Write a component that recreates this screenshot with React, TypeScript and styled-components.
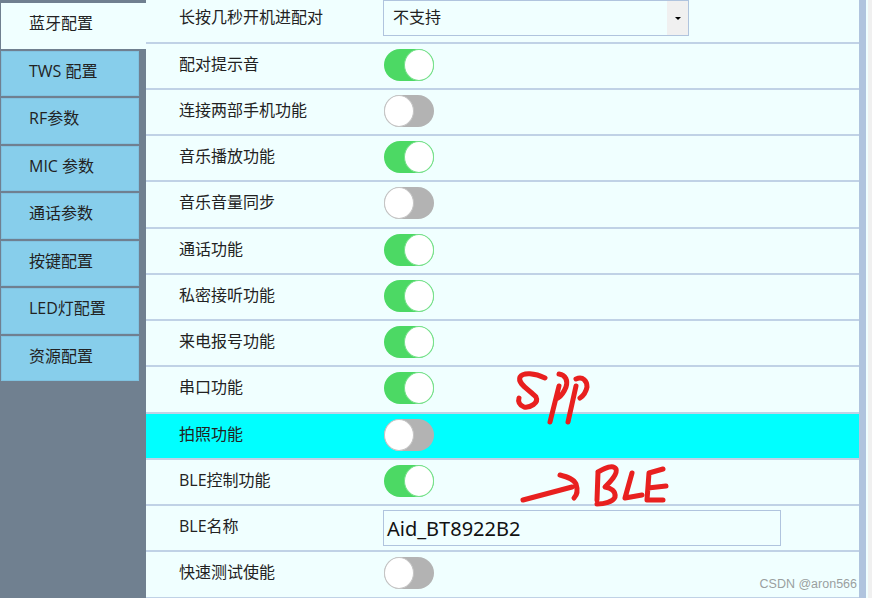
import React from "react";
import styled, { createGlobalStyle } from "styled-components";

const Global = createGlobalStyle`
  html, body { margin: 0; padding: 0; width: 872px; height: 598px; overflow: hidden; background: #f0f0f0; }
  #root { width: 872px; height: 598px; }
`;

const Screen = styled.div`
  position: relative;
  display: flex;
  width: 872px;
  height: 598px;
  overflow: hidden;
  font-family: "Open Sans", "Noto Sans CJK SC", sans-serif;
  font-size: 16px;
  color: #222;
  background: #f0f0f0;
`;

const Sidebar = styled.nav`
  flex: 0 0 146px;
  background: #708090;
  padding-top: 3px;
  display: flex;
  flex-direction: column;
  gap: 2px;
  box-sizing: border-box;
`;

const Tab = styled.div<{ $active?: boolean }>`
  box-sizing: border-box;
  height: 45.5px;
  margin-left: 1px;
  width: ${(p) => (p.$active ? "145px" : "138px")};
  padding: 0 0 5px 27px;
  display: flex;
  align-items: center;
  background: ${(p) => (p.$active ? "#f0ffff" : "#87ceeb")};
  border: 1px solid ${(p) => (p.$active ? "#f0ffff" : "#80c2e0")};
  font-size: 16px;
  line-height: 20px;
`;

const Main = styled.main`
  flex: 0 0 713px;
  background: #f0ffff;
  overflow: hidden;
`;

const Row = styled.div<{ $hi?: boolean }>`
  box-sizing: border-box;
  height: 46.25px;
  display: flex;
  align-items: center;
  border-bottom: 2px solid #c0d2e6;
  background: ${(p) => (p.$hi ? "#00ffff" : "transparent")};
  &:first-child { margin-top: -2.75px; }
`;

const Label = styled.div`
  flex: 0 0 237px;
  padding-left: 33px;
  box-sizing: border-box;
  font-size: 16px;
  line-height: 20px;
  position: relative;
  top: -2px;
  white-space: nowrap;
`;

const Select = styled.div`
  box-sizing: border-box;
  width: 306px;
  height: 36px;
  border: 1px solid #b0c4de;
  display: flex;
  align-items: center;
  justify-content: space-between;
  padding-left: 9px;
  font-size: 16px;
  line-height: 20px;
  position: relative;
  top: -1px;
`;

const SelectText = styled.span`
  position: relative;
  top: -1px;
`;

const Caret = styled.span`
  width: 21px;
  height: 34px;
  background: #f0f0f0;
  display: flex;
  align-items: center;
  justify-content: center;
  &::after {
    content: "";
    border-left: 3px solid transparent;
    border-right: 3px solid transparent;
    border-top: 3px solid #000;
  }
`;

const NameInput = styled.div`
  box-sizing: border-box;
  width: 398px;
  height: 36px;
  border: 1px solid #b0c4de;
  display: flex;
  align-items: center;
  padding-left: 3px;
  font-family: "Noto Sans", "Liberation Sans", sans-serif;
  font-size: 20px;
  color: #111;
`;

const Switch = styled.div<{ $on?: boolean }>`
  box-sizing: border-box;
  width: 50px;
  height: 32px;
  margin-left: 1px;
  border-radius: 16px;
  display: flex;
  justify-content: ${(p) => (p.$on ? "flex-end" : "flex-start")};
  background: ${(p) => (p.$on ? "#4cd964" : "#b3b3b3")};
  position: relative;
  top: -1px;
  &::after {
    content: "";
    box-sizing: border-box;
    width: 30px;
    height: 32px;
    border-radius: 50%;
    background: #fff;
    border: 1.5px solid ${(p) => (p.$on ? "#76e08a" : "#c4c4c4")};
  }
`;

const Rail = styled.div`
  flex: 0 0 7px;
  background: #b0c4de;
`;

const Gap = styled.div`
  flex: 0 0 2px;
  background: #f0ffff;
`;

const Scribble = styled.svg`
  position: absolute;
  left: 0;
  top: 0;
  width: 872px;
  height: 598px;
  pointer-events: none;
  fill: none;
  stroke: #e8201f;
  stroke-width: 5;
  stroke-linecap: round;
  stroke-linejoin: round;
`;

const Watermark = styled.div`
  position: absolute;
  right: 15px;
  top: 575px;
  font-family: "Liberation Sans", sans-serif;
  font-size: 12.5px;
  line-height: 18px;
  color: #9a9f9f;
`;

const tabs = ["蓝牙配置", "TWS 配置", "RF参数", "MIC 参数", "通话参数", "按键配置", "LED灯配置", "资源配置"];

type R = { label: string; on?: boolean; kind?: "select" | "input"; hi?: boolean };
const rows: R[] = [
  { label: "长按几秒开机进配对", kind: "select" },
  { label: "配对提示音", on: true },
  { label: "连接两部手机功能", on: false },
  { label: "音乐播放功能", on: true },
  { label: "音乐音量同步", on: false },
  { label: "通话功能", on: true },
  { label: "私密接听功能", on: true },
  { label: "来电报号功能", on: true },
  { label: "串口功能", on: true },
  { label: "拍照功能", on: false, hi: true },
  { label: "BLE控制功能", on: true },
  { label: "BLE名称", kind: "input" },
  { label: "快速测试使能", on: false },
];

export default function App() {
  return (
    <Screen>
      <Global />
      <Sidebar>
        {tabs.map((t, i) => (
          <Tab key={t} $active={i === 0}>{t}</Tab>
        ))}
      </Sidebar>
      <Main>
        {rows.map((r) => (
          <Row key={r.label} $hi={r.hi}>
            <Label>{r.label}</Label>
            {r.kind === "select" && (
              <Select><SelectText>不支持</SelectText><Caret /></Select>
            )}
            {r.kind === "input" && <NameInput>Aid_BT8922B2</NameInput>}
            {!r.kind && <Switch $on={r.on} />}
          </Row>
        ))}
      </Main>
      <Rail />
      <Gap />
      <Scribble viewBox="0 0 872 598">
        <path d="M545 378C535 373 523 372 520 377C517 384 530 390 536 397C539 403 530 408 524 407C519 405 518 401 519 398" />
        <path d="M550 422L559 386M559 374C566 375 568 381 566 387C564 392 561 396 558 398" />
        <path d="M568 422L576 386M576 379C583 376 587 381 587 387C586 392 583 396 580 398" />
        <path d="M523 500L572 487M560 475C568 477 574 479 576 484C578 490 577 495 574 498" />
        <path d="M598 472L597 500M598 472C605 468 613 464 616 469C618 474 610 482 605 487C611 488 616 491 615 497C613 502 604 504 597 504" />
        <path d="M632 473L625 498L642 495" />
        <path d="M663 469L649 473L647 500L663 500M648 488L666 486" />
      </Scribble>
      <Watermark>CSDN @aron566</Watermark>
    </Screen>
  );
}
